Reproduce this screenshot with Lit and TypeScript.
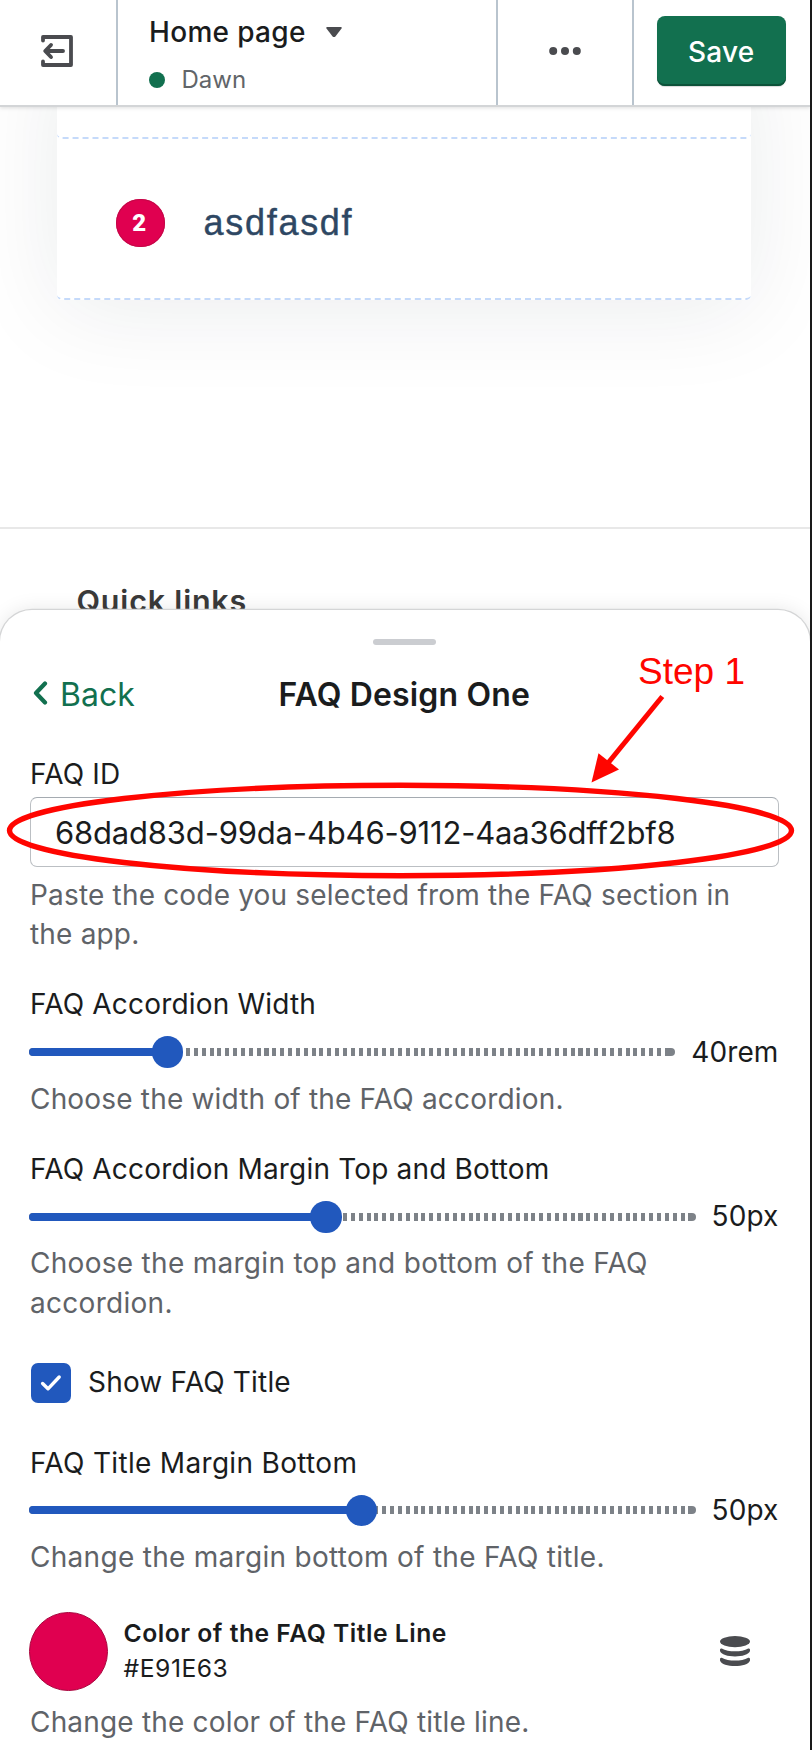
import { LitElement, html, css, svg } from "lit";
import { customElement, property } from "lit/decorators.js";

@customElement("range-field")
class RangeField extends LitElement {
  @property() label = "";
  @property() value = "";
  @property() help = "";
  @property({ type: Number }) fill = 0;

  static styles = css`
    :host { display: block; }
    .label, .help { line-height: 39.2px; font-size: 28px; }
    .label { letter-spacing: var(--label-ls, 0.18px); }
    .help { color: #5f6368; letter-spacing: var(--help-ls, 0.18px); }
    .row { display: flex; align-items: center; height: 55px; gap: 16px; margin-left: -1px; }
    .track {
      flex: 1; height: 8px; border-radius: 4px; position: relative;
      background:
        linear-gradient(#7d8288, #7d8288) right / 7px 8px no-repeat,
        repeating-linear-gradient(90deg, #7d8288 0 4px, #fff 4px 7.85px);
    }
    .fill { height: 8px; border-radius: 4px; background: #2158bd; }
    .thumb {
      position: absolute; top: -11.7px; width: 31.4px; height: 31.4px;
      margin-left: -15.7px; border-radius: 50%; background: #2158bd;
    }
    .value { font-size: 28px; line-height: 39px; letter-spacing: 0.1px; }
  `;

  render() {
    return html`
      <div class="label">${this.label}</div>
      <div class="row">
        <div class="track">
          <div class="fill" style="width:${this.fill}px"></div>
          <div class="thumb" style="left:${this.fill}px"></div>
        </div>
        <div class="value">${this.value}</div>
      </div>
      <div class="help">${this.help}</div>
    `;
  }
}

@customElement("app-root")
class AppRoot extends LitElement {
  static styles = css`
    :host {
      display: block; box-sizing: border-box; width: 812px; height: 1750px;
      position: relative; overflow: hidden; background: #fff; color: #1a1c1d;
      border-right: 2px solid #1a1a1a;
      font-family: Inter, "Liberation Sans", sans-serif;
    }
    .header {
      display: flex; height: 105px; position: relative; z-index: 2; background: #fff;
      border-bottom: 2px solid #d3d5d7; box-shadow: 0 1px 4px rgba(0, 0, 0, 0.13);
    }
    .exit { width: 116px; display: flex; align-items: center; justify-content: center; }
    .exit svg { margin: -3px 0 0 -2px; }
    .page { box-sizing: border-box; width: 380px; border-left: 2px solid #b9c4ce; padding: 12px 0 0 31px; }
    .title { display: flex; align-items: center; gap: 19px; font-size: 28px; font-weight: 500; line-height: 40px; letter-spacing: 0.33px; }
    .theme { display: flex; align-items: center; gap: 16.5px; margin-top: 8px; font-size: 24px; line-height: 40px; color: #616569; }
    .dot { width: 16px; height: 16px; border-radius: 50%; background: #12704f; }
    .more { box-sizing: border-box; width: 135.5px; border-left: 2px solid #b9c4ce; display: flex; justify-content: center; align-items: center; }
    .more svg { margin: -3px 0 0 0; }
    .actions { flex: 1; border-left: 2px solid #b9c4ce; padding: 15.5px 0 0 23px; }
    .save {
      width: 129.5px; height: 70.5px; box-sizing: border-box; border-radius: 8px; background: #12704f; color: #fff;
      box-shadow: inset 0 -2px 0 #0c5239, 0 1px 1px rgba(0, 0, 0, 0.15);
      text-align: center; font-size: 28px; font-weight: 500; line-height: 72px; letter-spacing: 0.2px;
    }
    .preview { height: 420px; overflow: hidden; }
    .faq {
      margin: -60px 59px 0 57px; height: 253px; border-radius: 4px; background: #fff;
      box-shadow: 0 8px 96px rgba(20, 30, 50, 0.085);
    }
    .item { box-sizing: border-box; border-bottom: 2px dashed #c5dafa; border-radius: 0 0 5px 5px; }
    .first { height: 92px; }
    .second { height: 161px; display: flex; align-items: center; padding: 9px 0 0 59px; gap: 39px; }
    .badge {
      width: 48.6px; height: 48.6px; border-radius: 50%; background: #e00050; color: #fff;
      box-shadow: inset 0 0 0 1px #c40848;
      text-align: center; text-indent: -2px; font: 900 24px/48px Roboto, sans-serif;
    }
    .question { font: 36px/44px "Liberation Sans", Arial, sans-serif; letter-spacing: 1.7px; color: #2e4763; -webkit-text-stroke: 0.4px #2e4763; }
    .footer { height: 120px; border-top: 2px solid #e8e8e8; padding: 52px 0 0 76.5px; font-size: 30.5px; font-weight: 600; line-height: 40px; letter-spacing: 0.8px; color: #3a3a3a; }
    .sheet {
      position: relative; z-index: 1; box-sizing: border-box; margin-top: -91px; height: 1180px; background: #fff;
      border-radius: 32px 32px 0 0; padding: 29px 31.5px 0 30px;
      box-shadow: 0 0 0 1.3px #d4d5d6, 0 0 20px rgba(0, 0, 0, 0.1);
    }
    .handle { width: 63px; height: 6px; border-radius: 3px; background: #cbcdd1; margin: 0 auto; }
    .bar { display: grid; grid-template-columns: 200px 1fr 200px; align-items: center; margin-top: 29.5px; height: 40px; font-size: 32px; line-height: 40px; }
    .back { display: flex; align-items: center; gap: 12px; color: #12704f; padding-left: 3px; }
    .back svg { margin-top: -4px; }
    .heading { text-align: center; font-weight: 600; white-space: nowrap; letter-spacing: 0.15px; }
    .label, .help { font-size: 28px; line-height: 39.2px; letter-spacing: 0.18px; }
    .help { color: #5f6368; }
    .id { margin-top: 40px; }
    .input {
      box-sizing: border-box; height: 70px; margin: 3px 0 9px; border: 1.5px solid #bbbfc3; border-top-color: #a5abb1;
      border-radius: 7px; padding-left: 24px; font-size: 31px; line-height: 69px; white-space: nowrap; letter-spacing: -0.18px;
    }
    .gap { margin-top: 31.3px; }
    .wide-help { --help-ls: 0.29px; }
    .wide-label { --label-ls: 0.32px; }
    .check { display: flex; align-items: center; gap: 17px; margin: 40px 0 41px 1px; height: 40px; }
    .box { width: 40px; height: 40px; border-radius: 7px; background: #2158bd; display: flex; align-items: center; justify-content: center; }
    .color { display: flex; align-items: center; margin: 35px 0 12px -1px; height: 78.6px; }
    .swatch { width: 78.6px; height: 78.6px; box-sizing: border-box; border-radius: 50%; background: #e00050; border: 1.5px solid #a8083f; }
    .meta { flex: 1; margin-left: 16px; font-size: 24.7px; line-height: 35px; letter-spacing: 0.5px; }
    .name { font-weight: 600; }
    .color svg { margin-right: 29px; }
    .notes { position: absolute; left: 0; top: 0; z-index: 3; }
    .note { font: 37px "Liberation Sans", Arial, sans-serif; fill: #ff0500; }
  `;

  private notes() {
    return html`<svg class="notes" width="810" height="1750" viewBox="0 0 810 1750">
      ${svg`<ellipse cx="400.5" cy="830.5" rx="391" ry="45.2" fill="none" stroke="#ff0500" stroke-width="5.4"/>
      <path d="M662.3 696.5 L608 763" stroke="#ff0500" stroke-width="5" fill="none"/>
      <path d="M591.5 782.5 L598.5 753.3 L619 769.5 Z" fill="#ff0500"/>
      <text class="note" x="638" y="684">Step 1</text>`}
    </svg>`;
  }

  render() {
    return html`
      <div class="header">
        <div class="exit">
          <svg width="32" height="32" viewBox="0 0 32 32" fill="none" stroke="#4a4b4f" stroke-width="3.8" stroke-linecap="round" stroke-linejoin="round">
            <path d="M2 5.6V2H30V30H2V26.4"/><path d="M22 16H5M10 10L4.2 16L10 22" stroke-width="3.9"/>
          </svg>
        </div>
        <div class="page">
          <div class="title"><span>Home page</span>
            <svg width="18" height="12" viewBox="0 0 18 12"><path d="M2.2 1H15.8Q17.6 1 16.5 2.6L10.6 10.2Q9 12 7.4 10.2L1.5 2.6Q.4 1 2.2 1Z" fill="#4a4b4f"/></svg>
          </div>
          <div class="theme"><span class="dot"></span><span>Dawn</span></div>
        </div>
        <div class="more">
          <svg width="32" height="8" viewBox="0 0 32 8" fill="#4a4b4f"><circle cx="4.2" cy="4" r="4"/><circle cx="16" cy="4" r="4"/><circle cx="27.8" cy="4" r="4"/></svg>
        </div>
        <div class="actions"><div class="save">Save</div></div>
      </div>
      <div class="preview">
        <div class="faq">
          <div class="item first"></div>
          <div class="item second"><div class="badge">2</div><div class="question">asdfasdf</div></div>
        </div>
      </div>
      <div class="footer">Quick links</div>
      <div class="sheet">
        <div class="handle"></div>
        <div class="bar">
          <div class="back">
            <svg width="15" height="24" viewBox="0 0 15 24" fill="none" stroke="#12704f" stroke-width="4.2" stroke-linecap="round" stroke-linejoin="round"><path d="M12 2.5L3 12L12 21.5"/></svg>
            <span>Back</span>
          </div>
          <div class="heading">FAQ Design One</div>
        </div>
        <div class="label id">FAQ ID</div>
        <div class="input">68dad83d-99da-4b46-9112-4aa36dff2bf8</div>
        <div class="help">Paste the code you selected from the FAQ section in<br>the app.</div>
        <range-field class="gap" label="FAQ Accordion Width" value="40rem" .fill=${138.3} help="Choose the width of the FAQ accordion."></range-field>
        <range-field class="gap wide-help" label="FAQ Accordion Margin Top and Bottom" value="50px" .fill=${297} help="Choose the margin top and bottom of the FAQ accordion."></range-field>
        <div class="check">
          <div class="box"><svg width="22" height="18" viewBox="0 0 22 18" fill="none" stroke="#fff" stroke-width="3.4" stroke-linecap="round" stroke-linejoin="round"><path d="M2.6 9.5L8 14.8L19.2 3"/></svg></div>
          <div class="label">Show FAQ Title</div>
        </div>
        <range-field class="wide-label wide-help" label="FAQ Title Margin Bottom" value="50px" .fill=${332.5} help="Change the margin bottom of the FAQ title."></range-field>
        <div class="color">
          <div class="swatch"></div>
          <div class="meta"><div class="name">Color of the FAQ Title Line</div><div>#E91E63</div></div>
          <svg width="30" height="30" viewBox="0 0 30 30" fill="#4a4b4f">
            <ellipse cx="15" cy="5.6" rx="15" ry="5.6"/>
            <path d="M0 14V13.6Q0 12.3 1.8 12.4C5 14.6 10 15.2 15 15.2S25 14.6 28.2 12.4Q30 12.3 30 13.6V15C29 18.6 22 20.4 15 20.4S1 18.6 0 15Z"/>
            <path d="M0 23.4V23Q0 21.7 1.8 21.8C5 24 10 24.6 15 24.6S25 24 28.2 21.8Q30 21.7 30 23V24.4C29 28.2 22 30 15 30S1 28.2 0 24.4Z"/>
          </svg>
        </div>
        <div class="help">Change the color of the FAQ title line.</div>
      </div>
      ${this.notes()}
    `;
  }
}
